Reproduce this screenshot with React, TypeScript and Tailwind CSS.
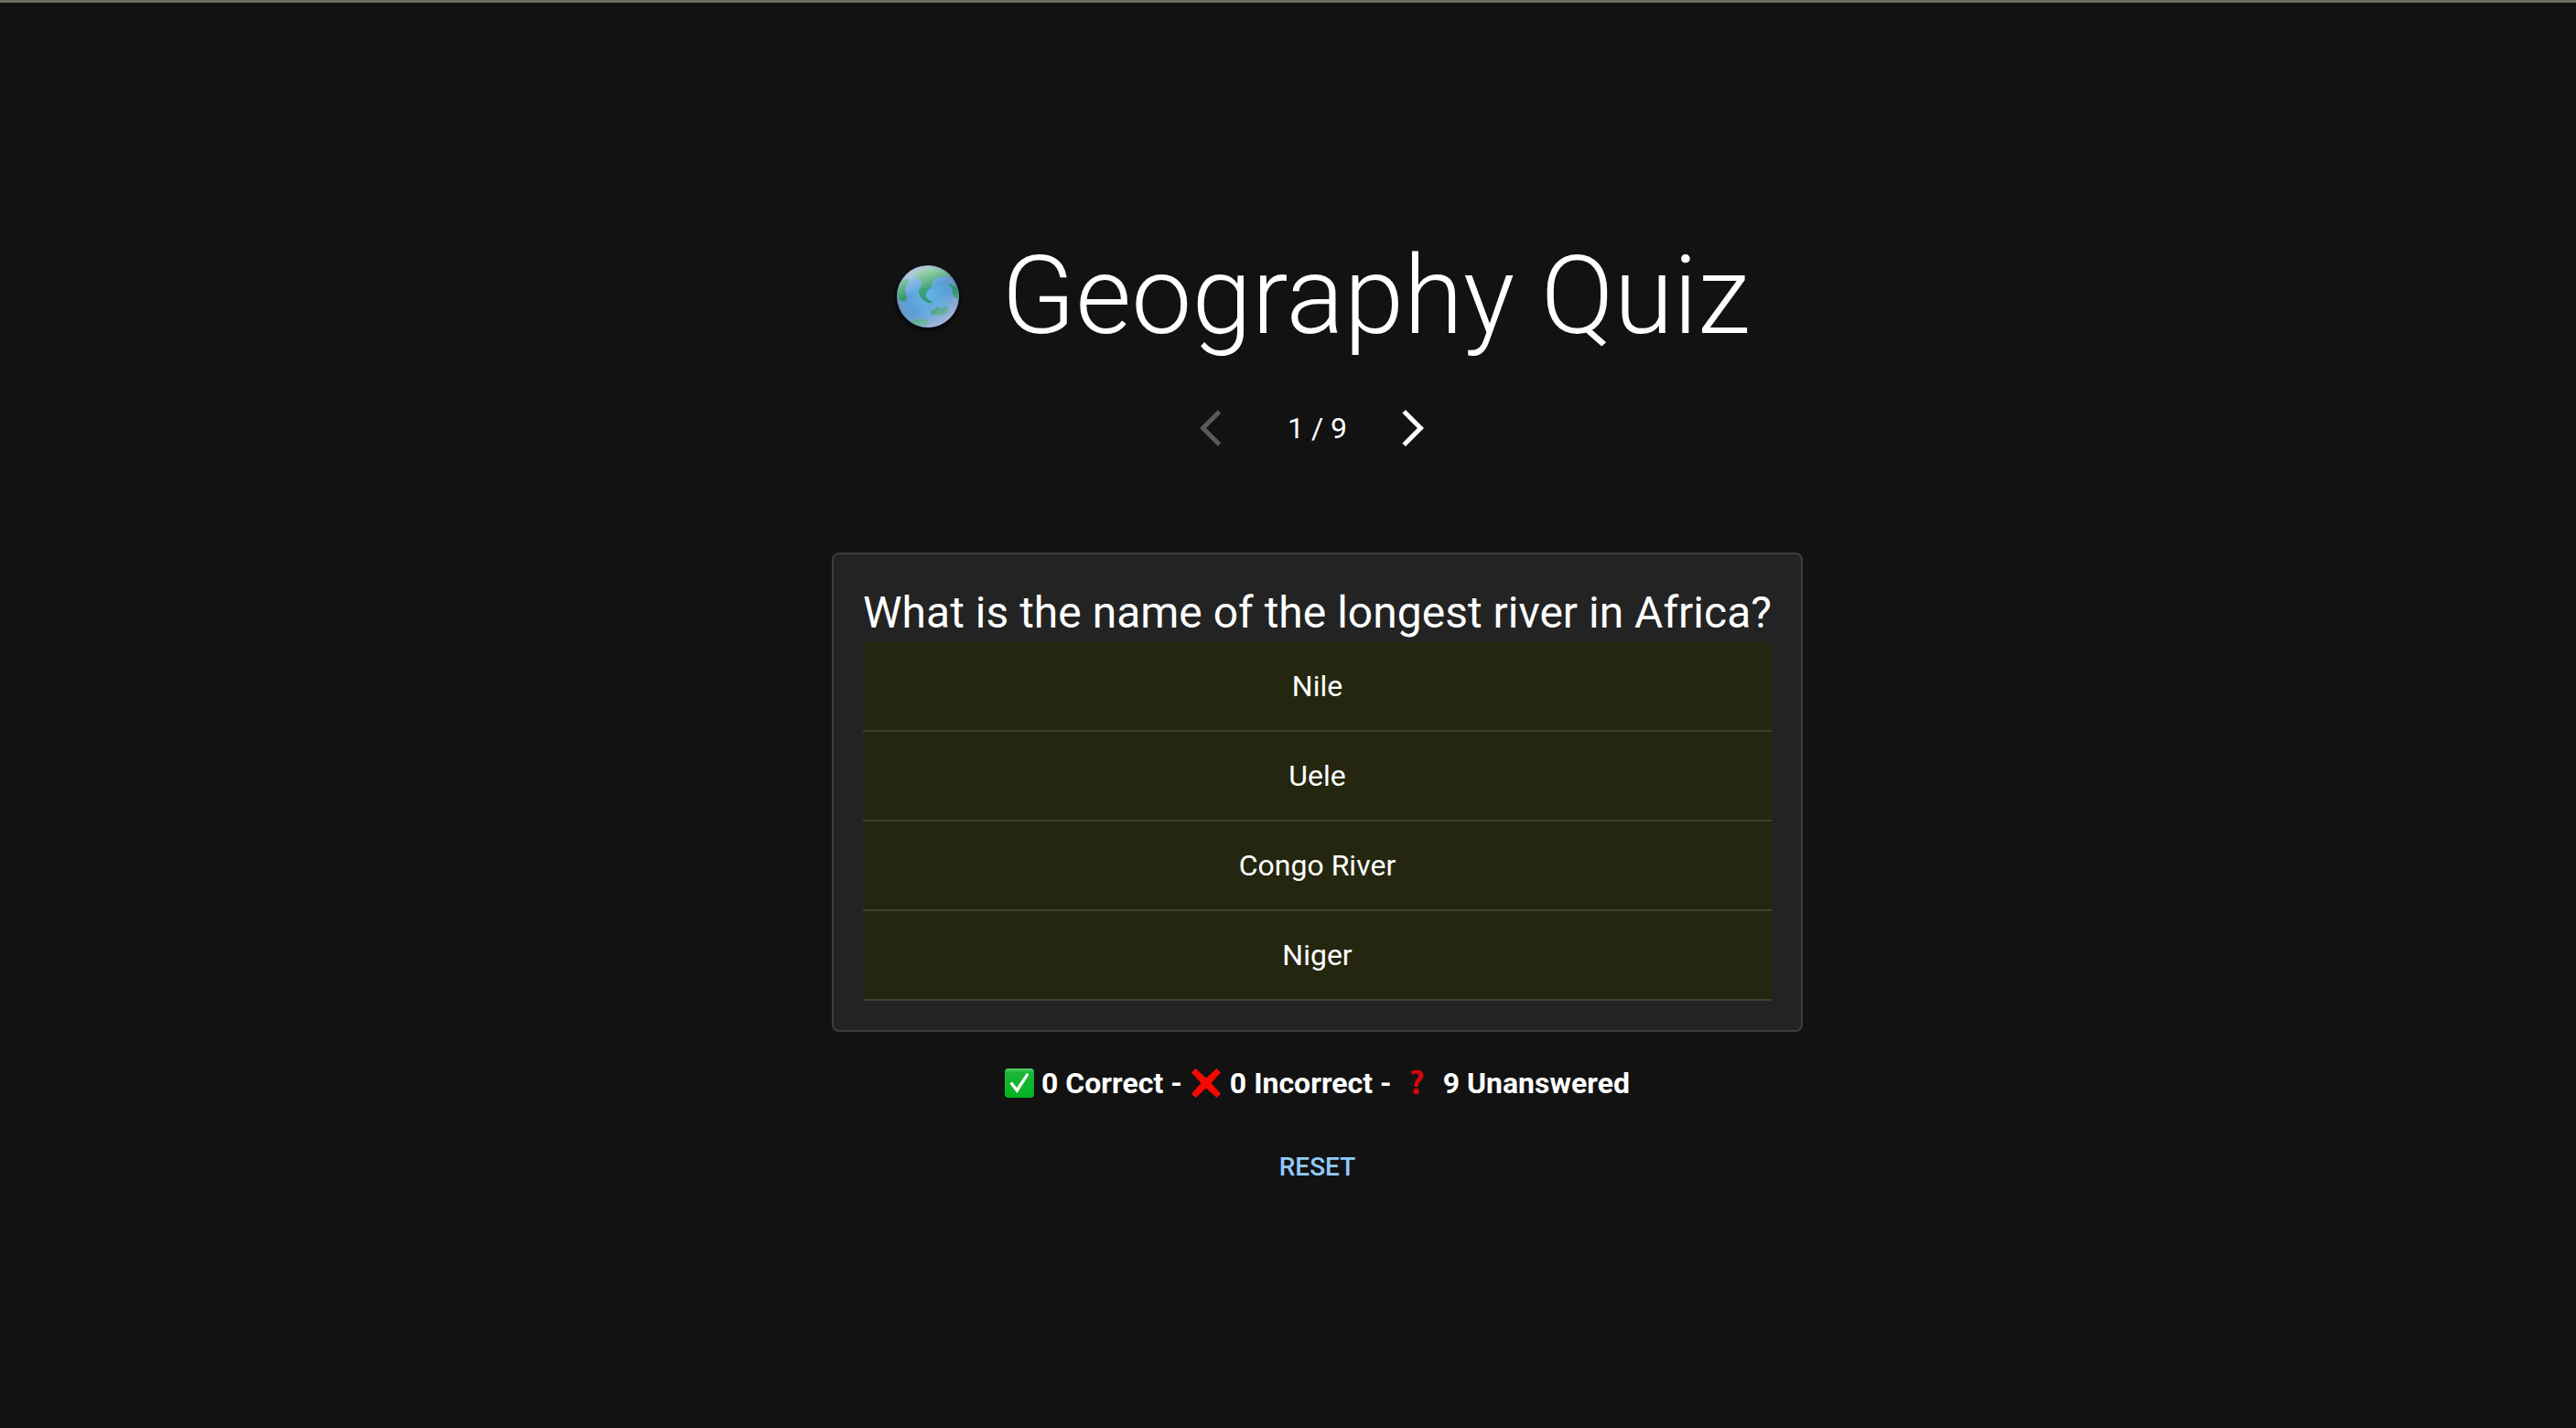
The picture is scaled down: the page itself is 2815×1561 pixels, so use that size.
const options = ['Nile', 'Uele', 'Congo River', 'Niger'];

function Globe() {
  return (
    <svg className="mr-8 size-24 shrink-0" viewBox="0 0 96 96" aria-hidden="true">
      <defs>
        <radialGradient id="sea" cx="0.5" cy="0.52" r="0.52">
          <stop offset="0" stopColor="#66b4e6" />
          <stop offset="0.65" stopColor="#5a9fd8" />
          <stop offset="0.9" stopColor="#6a9cc6" />
          <stop offset="1" stopColor="#4a6c8c" />
        </radialGradient>
        <linearGradient id="land" x1="0" y1="0" x2="0" y2="1">
          <stop offset="0" stopColor="#5bb27a" />
          <stop offset="1" stopColor="#2b9a74" />
        </linearGradient>
        <linearGradient id="shine" x1="0.25" y1="0" x2="0.42" y2="0.4">
          <stop offset="0" stopColor="#fff" stopOpacity="0.65" />
          <stop offset="1" stopColor="#fff" stopOpacity="0" />
        </linearGradient>
        <linearGradient id="glow" x1="0.35" y1="0.5" x2="0.65" y2="1">
          <stop offset="0.35" stopColor="#cfc8e6" stopOpacity="0" />
          <stop offset="1" stopColor="#cfc8e6" stopOpacity="0.6" />
        </linearGradient>
        <radialGradient id="shade" cx="0.5" cy="0.5" r="0.5">
          <stop offset="0.8" stopColor="#060608" />
          <stop offset="1" stopColor="#060608" stopOpacity="0" />
        </radialGradient>
        <clipPath id="ball">
          <circle cx="47" cy="48" r="34" />
        </clipPath>
      </defs>
      <circle cx="47" cy="51" r="39" fill="url(#shade)" />
      <circle cx="47" cy="48" r="34" fill="url(#sea)" />
      <g clipPath="url(#ball)">
        <path d="M34 29L33 24C35 20 41 17 50 16C57 16 67 20 71 26C66 26 59 26 56 28C52 29 53 35 50 39C47 40 45 43 45 47C45 50 48 53 52 53C52 56 48 56 45 54C41 52 37 47 37 42C37 39 41 37 40 34C40 31 38 29 34 29Z" fill="url(#land)" />
        <path d="M12 40C15 34 19 28 25 29C28 31 23 35 22 40C22 44 25 48 23 52C21 55 17 53 15 50Z" fill="#37996a" />
        <path d="M69 34C73 34 78 37 81 42V50C78 51 74 48 74 44C75 40 72 37 69 34Z" fill="#2f9569" />
        <path d="M50 65C51 61 54 63 56 61C56 59 58 57 60 61C62 62 63 59 66 59C68 59 70 62 69 65C68 68 65 66 63 69C60 70 58 68 56 68C53 69 50 69 50 65Z" fill="#35a078" />
        <path d="M29 76C34 71 43 72 49 76C48 79 43 81 39 80C35 80 31 79 29 76Z" fill="#45a884" />
        <circle cx="47" cy="48" r="34" fill="url(#shine)" />
        <circle cx="47" cy="48" r="34" fill="url(#glow)" />
      </g>
    </svg>
  );
}

function CheckIcon() {
  return (
    <svg className="mr-2 size-8" viewBox="0 0 32 32" aria-hidden="true">
      <defs>
        <linearGradient id="green" x1="0" y1="0" x2="0" y2="1">
          <stop offset="0" stopColor="#5fd46c" />
          <stop offset="0.12" stopColor="#1db53a" />
          <stop offset="1" stopColor="#04b31f" />
        </linearGradient>
      </defs>
      <rect width="32" height="32" rx="4" fill="url(#green)" />
      <path d="M5.5 16.5L8 14.5L13 21L24 5L26.500 6.500L13.500 27Z" fill="#fff" />
    </svg>
  );
}

function CrossIcon() {
  return (
    <svg className="mr-2 size-9" viewBox="0 0 36 36" aria-hidden="true">
      <path d="M2.500 6.500L6.500 2.500L18 13L29.500 2.500L33.500 6.500L23 18L33.500 29.500L29.500 33.500L18 23L6.500 33.500L2.500 29.500L13 18Z" fill="#f40800" stroke="#f40800" strokeLinejoin="round" />
    </svg>
  );
}

function QuestionIcon() {
  return (
    <svg className="mr-2 size-10" viewBox="0 0 40 40" aria-hidden="true">
      <path d="M13 7C18 5 27 5 26.500 12C26 17 21 18 20.500 24H16.500C16 17 21 15 21 12C21 8.500 16 9 14 11Z" fill="#d40808" />
      <circle cx="18.500" cy="29" r="3.200" fill="#d40808" />
    </svg>
  );
}

export default function App() {
  return (
    <main className="flex min-h-screen flex-col items-center justify-center border-t-[3px] border-[#6f6e60] bg-[#121212] pl-16 font-[Roboto,sans-serif] text-[32px] leading-[48px] text-white">
      <h1 className="flex items-center text-[118px] font-light leading-[144px]">
        <Globe />
        Geography Quiz
      </h1>

      <nav className="mt-8 flex items-center gap-8" aria-label="Questions">
        <button type="button" disabled aria-label="Previous question" className="p-4 text-[#595959]">
          <svg className="size-12" viewBox="0 0 24 24" fill="currentColor">
            <path d="M11.67 3.87 9.9 2.1 0 12l9.900 9.900 1.770-1.770L3.540 12z" />
          </svg>
        </button>
        <span>1 / 9</span>
        <button type="button" aria-label="Next question" className="p-4">
          <svg className="size-12" viewBox="0 0 24 24" fill="currentColor">
            <path d="M6.230 20.230 8 22l10-10L8 2 6.230 3.770 14.460 12z" />
          </svg>
        </button>
      </nav>

      <section className="mt-24 rounded-lg border-2 border-[#3d3d3d] bg-[#232323] p-8">
        <h2 className="text-[48px] leading-[64px]">What is the name of the longest river in Africa?</h2>
        <ul>
          {options.map((option) => (
            <li key={option} className="border-b-2 border-[#3f412c] bg-[#24260f]">
              <button type="button" className="w-full py-6 text-center">
                {option}
              </button>
            </li>
          ))}
        </ul>
      </section>

      <p className="mt-8 flex items-center font-bold">
        <CheckIcon />
        <span className="mr-2">0 Correct -</span>
        <CrossIcon />
        <span className="mr-2">0 Incorrect -</span>
        <QuestionIcon />
        <span>9 Unanswered</span>
      </p>

      <button type="button" className="mt-8 px-4 py-3 text-[28px] font-medium text-[#90caf9]">
        RESET
      </button>
    </main>
  );
}
